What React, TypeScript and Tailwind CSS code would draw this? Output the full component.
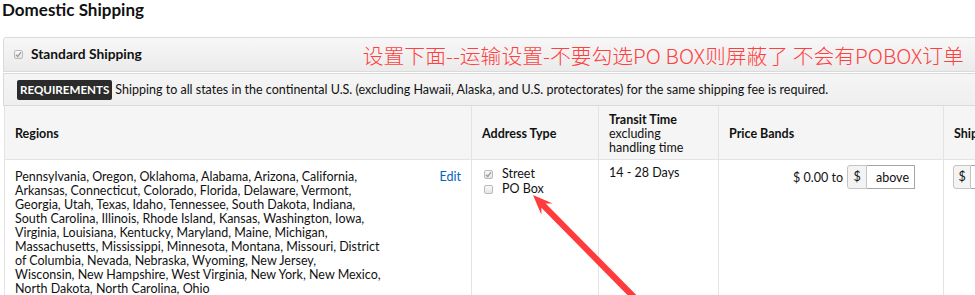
import React from "react"

const regionLines = [
    "Pennsylvania, Oregon, Oklahoma, Alabama, Arizona, California,",
    "Arkansas, Connecticut, Colorado, Florida, Delaware, Vermont,",
    "Georgia, Utah, Texas, Idaho, Tennessee, South Dakota, Indiana,",
    "South Carolina, Illinois, Rhode Island, Kansas, Washington, Iowa,",
    "Virginia, Louisiana, Kentucky, Maryland, Maine, Michigan,",
    "Massachusetts, Mississippi, Minnesota, Montana, Missouri, District",
    "of Columbia, Nevada, Nebraska, Wyoming, New Jersey,",
    "Wisconsin, New Hampshire, West Virginia, New York, New Mexico,",
    "North Dakota, North Carolina, Ohio",
]

const CheckBox = ({ checked }: { checked?: boolean }) => (
    <span className="flex h-[9px] w-[9px] items-center justify-center rounded-[2px] border border-[#b9b9b9] bg-gradient-to-b from-[#fafafa] to-[#e6e6e6]">
        {checked && (
            <svg width="7" height="7" viewBox="0 0 7 7">
                <path d="M1 3.8 L2.8 5.5 L6 1.2" fill="none" stroke="#9a9a9a" strokeWidth="1.3" />
            </svg>
        )}
    </span>
)

// red annotation arrow, tip near "PO Box"
const Arrow = () => {
    const tip = [533, 195]
    const d = [0.703, 0.711]
    const n = [-0.711, 0.703]
    const at = (len: number, off: number) =>
        `${tip[0] + d[0] * len + n[0] * off},${tip[1] + d[1] * len + n[1] * off}`
    const pts = [
        at(0, 0),
        at(20, 8),
        at(15, 3),
        at(150, 3.2),
        at(150, -3.2),
        at(15, -3),
        at(20, -8),
    ].join(" ")
    return (
        <svg className="pointer-events-none absolute left-0 top-0" width="975" height="295">
            <polygon points={pts} fill="#ff3b3b" />
        </svg>
    )
}

export default function App() {
    return (
        <div className="relative h-[295px] w-[975px] overflow-hidden bg-white font-['Lato','Noto_Sans',sans-serif] text-[#111]">
            <h2 className="h-[37px] pl-[2px] pt-[1px] text-[17px] font-bold leading-[18px]">Domestic Shipping</h2>

            <div className="ml-[3px] w-[1100px]">
                <div className="flex h-[35px] items-center rounded-tl-[3px] border border-[#dadada] bg-gradient-to-b from-[#f7f7f7] to-[#ebebeb] pl-[10px]">
                    <CheckBox checked />
                    <span className="ml-[8px] text-[13.75px] font-bold">Standard Shipping</span>
                    <span className="ml-[221px] font-['Noto_Sans_CJK_SC',sans-serif] text-[20.8px] font-light leading-[24px] text-[#ff4040]">
                        设置下面--运输设置-不要勾选PO BOX则屏蔽了 不会有POBOX订单
                    </span>
                </div>

                <div className="mt-[1px] flex h-[33px] items-center border border-[#dadada] bg-gradient-to-b from-[#f5f5f5] to-[#efefef] pl-[13px] pt-[1px]">
                    <span className="rounded-[2px] bg-[#2b2b2b] px-[3px] py-[2px] text-[11.6px] font-bold leading-[16px] text-white">REQUIREMENTS</span>
                    <span className="ml-[3px] text-[12.5px]">
                        Shipping to all states in the continental U.S. (excluding Hawaii, Alaska, and U.S. protectorates) for the same shipping fee is required.
                    </span>
                </div>

                <div className="ml-[1px] grid grid-cols-[467px_127px_120px_225px_1fr] border-l border-[#e3e3e3] text-[12.5px]">
                    <div className="flex h-[54px] items-center border-b border-r border-[#e3e3e3] bg-[#f5f5f5] pl-[10px] pt-[3px] font-bold">Regions</div>
                    <div className="flex h-[54px] items-center border-b border-r border-[#e3e3e3] bg-[#f5f5f5] pl-[10px] pt-[3px] font-bold">Address Type</div>
                    <div className="flex h-[54px] flex-col justify-center border-b border-r border-[#e3e3e3] bg-[#f5f5f5] pl-[10px] pt-[3px] leading-[14px]">
                        <span className="font-bold">Transit Time</span>
                        <span>excluding</span>
                        <span>handling time</span>
                    </div>
                    <div className="flex h-[54px] items-center border-b border-r border-[#e3e3e3] bg-[#f5f5f5] pl-[10px] pt-[3px] font-bold">Price Bands</div>
                    <div className="flex h-[54px] items-center border-b border-[#e3e3e3] bg-[#f5f5f5] pl-[10px] pt-[3px] font-bold">Shipping Fee</div>

                    <div className="flex h-[140px] justify-between border-r border-[#e3e3e3] pl-[10px] pr-[10px] pt-[10px] leading-[14px]">
                        <p>
                            {regionLines.map((l) => (
                                <span key={l} className="block whitespace-nowrap">{l}</span>
                            ))}
                        </p>
                        <span className="text-[#0066c0]">Edit</span>
                    </div>
                    <div className="flex flex-col gap-[1px] border-r border-[#e3e3e3] pl-[12px] pt-[7px] leading-[14px]">
                        <label className="flex items-center gap-[9px]">
                            <CheckBox checked />
                            <span>Street</span>
                        </label>
                        <label className="flex items-center gap-[9px]">
                            <CheckBox />
                            <span>PO Box</span>
                        </label>
                    </div>
                    <div className="border-r border-[#e3e3e3] pl-[10px] pt-[6px] leading-[14px]">14 - 28 Days</div>
                    <div className="flex items-start justify-end border-r border-[#e3e3e3] pr-[28px] pt-[5px]">
                        <span className="mr-[4px] mt-[6px] leading-[14px]">$ 0.00 to</span>
                        <span className="flex h-[24px] w-[20px] items-center justify-center rounded-l-[3px] border border-[#c4c4c4] bg-[#f3f3f3]">$</span>
                        <span className="flex h-[24px] w-[48px] items-center border border-l-0 border-[#a6a6a6] pl-[9px] pt-[2px]">above</span>
                    </div>
                    <div className="flex items-start pl-[9px] pt-[5px]">
                        <span className="flex h-[24px] w-[18px] items-center justify-center rounded-l-[3px] border border-[#c4c4c4] bg-[#f3f3f3]">$</span>
                        <span className="h-[24px] w-[60px] border border-l-0 border-[#a6a6a6]" />
                    </div>
                </div>
            </div>

            <Arrow />
        </div>
    )
}
